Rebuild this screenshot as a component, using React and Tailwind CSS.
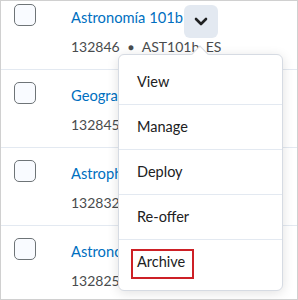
import React from "react";

const rows = [
  { title: "Astronomía 101b", code: "132846", sub: "AST101b_ES", first: true },
  { title: "Geography 101", code: "132845", sub: "GEO101" },
  { title: "Astrophysics 201", code: "132832", sub: "AST201" },
  { title: "Astronomy 101", code: "132825", sub: "AST101" },
];

function Chevron() {
  return (
    <svg width="14" height="9" viewBox="0 0 14 9" fill="none">
      <path d="M2 2l5 5 5-5" stroke="#202122" strokeWidth="2.6" strokeLinecap="round" strokeLinejoin="round" />
    </svg>
  );
}

export default function App() {
  const items = ["View", "Manage", "Deploy", "Re-offer", "Archive"];
  return (
    <div
      className="relative w-[298px] h-[300px] overflow-hidden bg-white border border-[#d0d0d0]"
      style={{ fontFamily: "Lato, 'Noto Sans', sans-serif" }}
    >
      <div className="-mt-[9px] flex flex-col">
        {rows.map((r, i) => (
          <div key={i} className="flex h-[78px] border-b border-[#e3e9f1]">
            <div className="pl-[13px] pt-[12px]">
              <div className="w-[22px] h-[22px] rounded-[5px] border border-[#6e7477] bg-[#f9fbff]" />
            </div>
            <div className="ml-[35px] pt-[13px] min-w-0 flex flex-col">
              <div className="flex h-[24px] whitespace-nowrap">
                <span className="text-[14.7px] leading-[24px] text-[#006fbf]">{r.title}</span>
                {r.first && (
                  <div className="ml-[1px] w-[34px] h-[33px] shrink-0 rounded-[6px] bg-[#e3e9f1] flex items-center justify-center">
                    <Chevron />
                  </div>
                )}
              </div>
              <div className="mt-[8px] text-[14px] leading-[20px] text-[#494c4e] whitespace-nowrap flex items-center">
                <span>{r.code}</span>
                <span className="mx-[8px] text-[10px]">●</span>
                <span>{r.sub}</span>
              </div>
            </div>
          </div>
        ))}
      </div>

      <div className="absolute left-[117px] top-[53px] w-[165px] rounded-[6px] border border-[#d6dbe3] bg-white shadow-[0_2px_12px_rgba(0,0,0,0.12)] pt-[5px] pb-[6px] flex flex-col">
        <div className="absolute left-[75px] -top-[7px] w-[12px] h-[12px] rotate-45 bg-white border-t border-l border-[#d6dbe3]" />
        {items.map((it, i) => (
          <div
            key={it}
            className={`relative flex items-center px-[18px] text-[14.5px] text-[#202122] ${i > 0 ? "h-[45px] border-t border-[#e3e9f1]" : "h-[44px]"}`}
          >
            <span className="relative leading-[24px]">
              {it}
              {it === "Archive" && (
                <span className="absolute -left-[6px] -top-[1px] w-[63px] h-[30px] border-2 border-[#cd2026]" />
              )}
            </span>
          </div>
        ))}
      </div>
    </div>
  );
}
